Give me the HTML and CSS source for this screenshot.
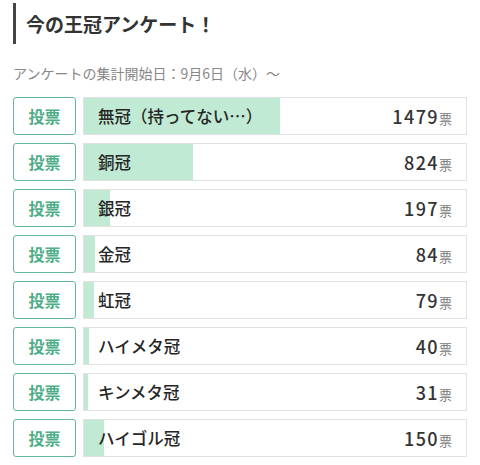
FILE: index.html
```html
<!DOCTYPE html>
<html lang="ja">
<head>
<meta charset="utf-8">
<link rel="stylesheet" href="styles.css">
</head>
<body>
<div class="page">
  <h1 class="title">今の王冠アンケート！</h1>
  <p class="since">アンケートの集計開始日：9月6日（水）〜</p>
  <ul class="poll">
    <li class="row"><button class="vote">投票</button><div class="bar"><div class="fill" style="width:51.3%"></div><span class="label">無冠（持ってない…）</span><span class="count">1479<small>票</small></span></div></li>
    <li class="row"><button class="vote">投票</button><div class="bar"><div class="fill" style="width:28.6%"></div><span class="label">銅冠</span><span class="count">824<small>票</small></span></div></li>
    <li class="row"><button class="vote">投票</button><div class="bar"><div class="fill" style="width:6.8%"></div><span class="label">銀冠</span><span class="count">197<small>票</small></span></div></li>
    <li class="row"><button class="vote">投票</button><div class="bar"><div class="fill" style="width:2.9%"></div><span class="label">金冠</span><span class="count">84<small>票</small></span></div></li>
    <li class="row"><button class="vote">投票</button><div class="bar"><div class="fill" style="width:2.7%"></div><span class="label">虹冠</span><span class="count">79<small>票</small></span></div></li>
    <li class="row"><button class="vote">投票</button><div class="bar"><div class="fill" style="width:1.4%"></div><span class="label">ハイメタ冠</span><span class="count">40<small>票</small></span></div></li>
    <li class="row"><button class="vote">投票</button><div class="bar"><div class="fill" style="width:1.1%"></div><span class="label">キンメタ冠</span><span class="count">31<small>票</small></span></div></li>
    <li class="row"><button class="vote">投票</button><div class="bar"><div class="fill" style="width:5.2%"></div><span class="label">ハイゴル冠</span><span class="count">150<small>票</small></span></div></li>
  </ul>
</div>
</body>
</html>
```
FILE: styles.css
```css
* { box-sizing: border-box; }
html, body { margin: 0; padding: 0; background: #fff; }
body {
  font-family: "Noto Sans CJK JP", "Noto Sans", sans-serif;
  color: #333;
}
.page { padding: 3px 13px 0 13px; }
.title {
  margin: 0;
  border-left: 3px solid #444;
  padding-left: 10px;
  height: 41px;
  line-height: 42px;
  font-size: 19px;
  font-weight: 700;
  color: #333;
}
.since {
  margin: 19px 0 0 0;
  font-size: 14px;
  line-height: 20px;
  color: #888;
}
.poll {
  list-style: none;
  margin: 14px 0 0 0;
  padding: 0;
  display: flex;
  flex-direction: column;
  gap: 8px;
}
.row { display: flex; gap: 7px; height: 38px; }
.vote {
  flex: 0 0 63px;
  height: 38px;
  border: 1.5px solid #63b996;
  border-radius: 3px;
  background: #fff;
  color: #4fae88;
  font-family: inherit;
  font-size: 16px;
  font-weight: 700;
  padding: 0;
}
.bar {
  position: relative;
  width: 384px;
  height: 38px;
  border: 1px solid #e2e2e2;
  display: flex;
  align-items: center;
  justify-content: space-between;
  padding: 0 14px 0 14px;
}
.fill {
  position: absolute;
  left: 0; top: 0; bottom: 0;
  background: #c1ead4;
}
.label {
  position: relative;
  font-size: 16.5px;
  font-weight: 500;
  color: #262626;
}
.count {
  position: relative;
  font-size: 18px;
  font-weight: 500;
  letter-spacing: 1.4px;
  color: #333;
}
.count small {
  font-size: 13px;
  color: #777;
  font-weight: 400;
  letter-spacing: 0;
  margin-left: 0;
}
```
